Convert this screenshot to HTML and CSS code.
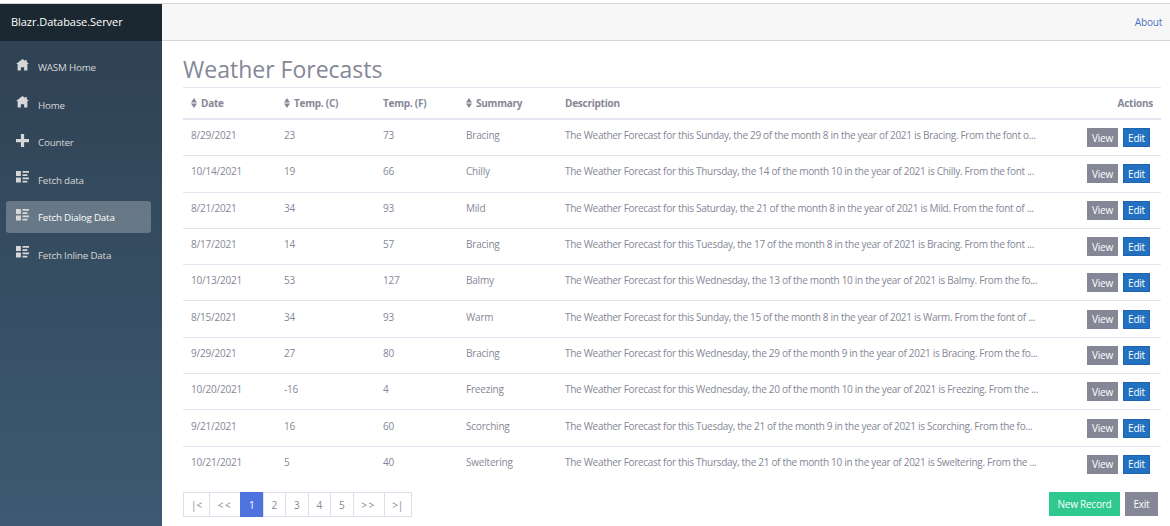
FILE: index.html
```html
<!DOCTYPE html>
<html lang="en">
<head>
    <meta charset="UTF-8">
    <meta name="viewport" content="width=device-width, initial-scale=1.0">
    <title>Blazr.Database.Server</title>
    <link rel="stylesheet" href="styles.css">
</head>
<body>

<svg class="icon-defs" width="0" height="0">
    <symbol id="i-home" viewBox="0 0 8 8"><path d="M4 0 0 3h1v4h2V5h2v2h2V3h1L6.6 1.9V.6h-1v.6z"/></symbol>
    <symbol id="i-plus" viewBox="0 0 8 8"><path d="M3 0v3H0v2h3v3h2V5h3V3H5V0z"/></symbol>
    <symbol id="i-list" viewBox="0 0 8 8"><path d="M0 0v3h3V0zm4 0v1h4V0zm0 2v1h3V2zM0 4v3h3V4zm4 0v1h4V4zm0 2v1h3V6z"/></symbol>
    <symbol id="i-sort" viewBox="0 0 6 10"><path d="M3 0 6 4.5H0zM0 5.5h6L3 10z"/></symbol>
</svg>

<div class="page">
    <!-- Side menu -->
    <div class="sidebar">
        <div class="brand">Blazr.Database.Server</div>
        <ul class="nav">
            <li class="nav-item"><a class="nav-link"><svg class="nav-icon"><use href="#i-home"/></svg>WASM Home</a></li>
            <li class="nav-item"><a class="nav-link"><svg class="nav-icon"><use href="#i-home"/></svg>Home</a></li>
            <li class="nav-item"><a class="nav-link"><svg class="nav-icon"><use href="#i-plus"/></svg>Counter</a></li>
            <li class="nav-item"><a class="nav-link"><svg class="nav-icon"><use href="#i-list"/></svg>Fetch data</a></li>
            <li class="nav-item"><a class="nav-link active"><svg class="nav-icon"><use href="#i-list"/></svg>Fetch Dialog Data</a></li>
            <li class="nav-item"><a class="nav-link"><svg class="nav-icon"><use href="#i-list"/></svg>Fetch Inline Data</a></li>
        </ul>
    </div>

    <div class="main">
        <div class="top-row"><a class="about">About</a></div>
        <div class="content">
            <h1>Weather Forecasts</h1>
            <table class="grid">
                <colgroup>
                    <col class="c-date"><col class="c-temp"><col class="c-tempf"><col class="c-summary"><col class="c-desc"><col class="c-actions">
                </colgroup>
                <thead>
                    <tr>
                        <th><svg class="sort"><use href="#i-sort"/></svg>Date</th>
                        <th><svg class="sort"><use href="#i-sort"/></svg>Temp. (C)</th>
                        <th>Temp. (F)</th>
                        <th><svg class="sort"><use href="#i-sort"/></svg>Summary</th>
                        <th>Description</th>
                        <th class="right">Actions</th>
                    </tr>
                </thead>
                <tbody id="rows"></tbody>
            </table>
            <div class="footer-row">
                <div class="pager">
                    <a class="page-btn">|&lt;</a><a class="page-btn wide">&lt;&lt;</a><a class="page-btn current">1</a><a class="page-btn">2</a><a class="page-btn">3</a><a class="page-btn">4</a><a class="page-btn">5</a><a class="page-btn wide">&gt;&gt;</a><a class="page-btn">&gt;|</a>
                </div>
                <div class="footer-actions">
                    <button class="btn-new">New Record</button>
                    <button class="btn-exit">Exit</button>
                </div>
            </div>
        </div>
    </div>
</div>

<script>
    // date, temp c, temp f, summary, weekday, day, month, tail of the description
    const forecasts = [
        ['8/29/2021', 23, 73, 'Bracing', 'Sunday', 29, 8, 'From the font o...'],
        ['10/14/2021', 19, 66, 'Chilly', 'Thursday', 14, 10, 'From the font ...'],
        ['8/21/2021', 34, 93, 'Mild', 'Saturday', 21, 8, 'From the font of ...'],
        ['8/17/2021', 14, 57, 'Bracing', 'Tuesday', 17, 8, 'From the font ...'],
        ['10/13/2021', 53, 127, 'Balmy', 'Wednesday', 13, 10, 'From the fo...'],
        ['8/15/2021', 34, 93, 'Warm', 'Sunday', 15, 8, 'From the font of ...'],
        ['9/29/2021', 27, 80, 'Bracing', 'Wednesday', 29, 9, 'From the fo...'],
        ['10/20/2021', -16, 4, 'Freezing', 'Wednesday', 20, 10, 'From the ...'],
        ['9/21/2021', 16, 60, 'Scorching', 'Tuesday', 21, 9, 'From the fo...'],
        ['10/21/2021', 5, 40, 'Sweltering', 'Thursday', 21, 10, 'From the ...']
    ];

    const rows = document.getElementById('rows');
    forecasts.forEach((f) => {
        const desc = `The Weather Forecast for this ${f[4]}, the ${f[5]} of the month ${f[6]} in the year of 2021 is ${f[3]}. ${f[7]}`;
        const tr = document.createElement('tr');
        tr.innerHTML = `<td>${f[0]}</td><td>${f[1]}</td><td>${f[2]}</td><td>${f[3]}</td><td class="cell-desc">${desc}</td>` +
            `<td class="right cell-actions"><button class="btn-view">View</button><button class="btn-edit">Edit</button></td>`;
        rows.appendChild(tr);
    });
</script>

</body>
</html>
```

FILE: styles.css
```css
html, body {
    height: 100%;
}
body {
    font-family: "Open Sans", "Noto Sans", sans-serif;
    font-size: 10px;
    letter-spacing: -0.2px;
    margin: 0;
    padding: 0;
    background-color: #fff;
    color: #858796;
    overflow: hidden;
}
.icon-defs {
    display: block;
    height: 0;
}
.page {
    display: flex;
    height: 522px;
    margin-top: 3px;
    border-top: 1px solid #d6d6d6;
}
.sidebar {
    width: 162px;
    flex-shrink: 0;
    background-image: linear-gradient(180deg, #2e4051 0%, #3d5a72 100%);
}
.brand {
    height: 37px;
    line-height: 36px;
    padding-left: 11px;
    background-color: #1b2831;
    color: #fff;
    font-size: 11px;
    letter-spacing: -0.05px;
}
.nav {
    list-style: none;
    margin: 0;
    padding: 10px 0 0;
}
.nav-item {
    height: 37.5px;
    padding: 0 11px 0 6px;
}
.nav-link {
    display: flex;
    align-items: center;
    box-sizing: border-box;
    height: 32px;
    color: #d7d7d7;
    font-size: 9.8px;
    padding: 1.5px 0 0 10px;
    border-radius: 3px;
}
.nav-link.active {
    background-color: rgba(255, 255, 255, 0.25);
    color: #fff;
}
.nav-icon {
    width: 13px;
    height: 13px;
    margin: -5px 9px 0 0;
    fill: #d7d7d7;
}
.main {
    flex: 1;
    min-width: 0;
}
.top-row {
    height: 36px;
    display: flex;
    align-items: center;
    justify-content: flex-end;
    padding-right: 8px;
    background-color: #f7f7f7;
    border-bottom: 1px solid #d6d6d6;
}
.about {
    color: #4e6fc4;
}
.content {
    padding: 0 9px 0 21px;
}
h1 {
    font-size: 23px;
    font-weight: 400;
    letter-spacing: 0;
    line-height: 36px;
    margin: 0;
    padding-top: 10px;
    color: #858796;
}
.grid {
    width: 100%;
    table-layout: fixed;
    border-collapse: collapse;
    border-top: 1px solid #e3e6f0;
}
.c-date { width: 93px; }
.c-temp { width: 99px; }
.c-tempf { width: 83px; }
.c-summary { width: 99px; }
.c-desc { width: 491px; }
th {
    height: 30px;
    padding: 0 8px;
    text-align: left;
    font-weight: 700;
    letter-spacing: -0.25px;
    border-bottom: 2px solid #e3e6f0;
}
td {
    height: 30.3px;
    padding: 0 8px 5px;
    border-bottom: 1px solid #e3e6f0;
    white-space: nowrap;
}
tbody tr:last-child td {
    border-bottom: none;
}
td.cell-desc {
    letter-spacing: -0.3px;
}
td.cell-actions {
    padding-bottom: 0;
}
.right {
    text-align: right;
}
.sort {
    width: 6px;
    height: 10px;
    margin-right: 4px;
    vertical-align: -1px;
    fill: #858796;
}
button {
    font-family: inherit;
    font-size: 10px;
    letter-spacing: -0.25px;
    border: none;
    color: #fff;
    cursor: pointer;
}
.btn-view, .btn-edit {
    height: 19px;
    padding: 0;
    vertical-align: middle;
}
.btn-view {
    width: 31px;
    background-color: #858796;
    margin-right: 5px;
}
.btn-edit {
    width: 27px;
    background-color: #2271c1;
    border: 1px solid #1f65ad;
    margin-right: 3px;
}
.footer-row {
    display: flex;
    justify-content: space-between;
    align-items: flex-start;
    padding: 10px 3px 0 0;
}
.pager {
    display: flex;
}
.page-btn {
    height: 25px;
    line-height: 24px;
    box-sizing: border-box;
    border: 1px solid #dddfeb;
    margin-left: -1px;
    width: 23.5px;
    text-align: center;
}
.page-btn:first-child {
    margin-left: 0;
    width: 27px;
}
.page-btn:last-child {
    width: 28.5px;
}
.page-btn.wide {
    width: 32px;
    letter-spacing: 1.5px;
}
.page-btn.current {
    background-color: #4e73df;
    border-color: #4e73df;
    color: #fff;
}
.footer-actions {
    display: flex;
    gap: 5px;
}
.btn-new, .btn-exit {
    height: 24px;
    padding: 0;
}
.btn-new {
    width: 71px;
    background-color: #2fc88f;
}
.btn-exit {
    width: 33px;
    background-color: #858796;
}
```
